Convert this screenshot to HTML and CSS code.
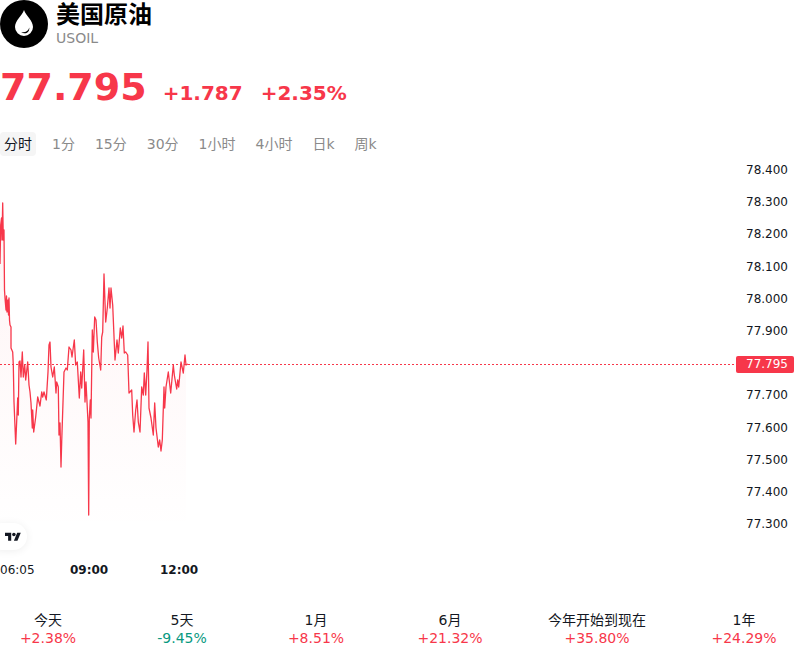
FILE: index.html
```html
<!DOCTYPE html>
<html lang="zh-CN">
<head>
    <meta charset="UTF-8">
    <meta name="viewport" content="width=device-width, initial-scale=1.0">
    <title>美国原油</title>
    <link rel="stylesheet" href="styles.css">
</head>
<body>
    <header class="symbol">
        <svg class="symbol-icon" width="48" height="48" viewBox="0 0 48 48">
            <circle cx="24" cy="24" r="24" fill="#000"/>
            <path d="M24 10 C22 16 15 20.500 15 27 A9 9 0 0 0 33 27 C33 20.500 26 16 24 10 Z" fill="#fff"/>
            <path d="M21 32 C25 33 28.500 31 29.300 27.500 C29.800 32.500 25 35 21 32 Z" fill="#000"/>
        </svg>
        <div class="symbol-text">
            <h1>美国原油</h1>
            <p>USOIL</p>
        </div>
    </header>

    <div class="quote">
        <span class="quote-price">77.795</span>
        <span class="quote-change">+1.787</span>
        <span class="quote-change">+2.35%</span>
    </div>

    <nav class="tabs">
        <a class="tab active">分时</a>
        <a class="tab">1分</a>
        <a class="tab">15分</a>
        <a class="tab">30分</a>
        <a class="tab">1小时</a>
        <a class="tab">4小时</a>
        <a class="tab">日k</a>
        <a class="tab">周k</a>
    </nav>

    <section class="chart">
        <svg class="chart-plot" width="736" height="404" viewBox="0 156 736 404">
            <defs>
                <linearGradient id="area-fill" x1="0" y1="203" x2="0" y2="532" gradientUnits="userSpaceOnUse">
                    <stop offset="0" stop-color="#f7374a" stop-opacity="0.06"/>
                    <stop offset="1" stop-color="#f7374a" stop-opacity="0"/>
                </linearGradient>
            </defs>
            <polygon fill="url(#area-fill)" points="0,532 0,264 0.700,225 1.500,218 2,240 2.700,203 3.300,240 4,230 4.500,290 5,298 6,310 6.500,296 7,312 8,300 8.500,315 9,298 9.500,320 10,325 11,327 11,348 12.700,352 13.300,365 14,402 15.700,444 17.700,398 18.300,415 19,362 20,361 21,377 22.300,352 23.300,377 24.700,365 25.700,380 27.700,362 29,385 30,392 31,403 32.300,428 32.700,410 33.700,432 35.700,417 37.700,397 40,406 41.700,392 42.700,397 44,392 46.300,400 48,372 49,345 50,342 51,367 52.700,377 54.300,367 56,393 56.700,382 58.300,387 59,435 60,423 61,467 61.700,442 64,372 66,368 67.300,370 69,347 71,350 72,357 74.300,340 75.700,365 77.300,362 78.300,380 79.300,398 80.700,372 81.700,388 83.700,350 85,402 86,382 88,422 88.700,515 89.300,418 90.300,400 91,418 92.300,330 93.300,352 94.700,317 96,320 97.300,342 98.700,358 100.700,370 101.700,337 102.700,332 104,274 105.700,322 107.300,308 109,288 110,308 111,288 112.700,305 115,360 117,340 118.300,353 120.300,328 121.700,338 123,326 124.300,353 125.700,352 127.700,355 129,393 131.700,390 132.700,415 134,432 135.700,410 137,400 138.300,422 140,432 141.700,387 143.300,395 144.300,373 145.700,395 147,370 148,342 149,408 151,418 153.300,435 154.700,403 156,428 158.300,447 159.700,440 161,451 162.300,440 164,387 164.700,408 166,387 168.300,372 170.700,393 173.300,365 174.300,375 176.700,389 177.700,380 178.700,387 181,362 183.300,373 185,355 186,365 186,532"/>
            <polyline class="chart-line" points="0,264 0.700,225 1.500,218 2,240 2.700,203 3.300,240 4,230 4.500,290 5,298 6,310 6.500,296 7,312 8,300 8.500,315 9,298 9.500,320 10,325 11,327 11,348 12.700,352 13.300,365 14,402 15.700,444 17.700,398 18.300,415 19,362 20,361 21,377 22.300,352 23.300,377 24.700,365 25.700,380 27.700,362 29,385 30,392 31,403 32.300,428 32.700,410 33.700,432 35.700,417 37.700,397 40,406 41.700,392 42.700,397 44,392 46.300,400 48,372 49,345 50,342 51,367 52.700,377 54.300,367 56,393 56.700,382 58.300,387 59,435 60,423 61,467 61.700,442 64,372 66,368 67.300,370 69,347 71,350 72,357 74.300,340 75.700,365 77.300,362 78.300,380 79.300,398 80.700,372 81.700,388 83.700,350 85,402 86,382 88,422 88.700,515 89.300,418 90.300,400 91,418 92.300,330 93.300,352 94.700,317 96,320 97.300,342 98.700,358 100.700,370 101.700,337 102.700,332 104,274 105.700,322 107.300,308 109,288 110,308 111,288 112.700,305 115,360 117,340 118.300,353 120.300,328 121.700,338 123,326 124.300,353 125.700,352 127.700,355 129,393 131.700,390 132.700,415 134,432 135.700,410 137,400 138.300,422 140,432 141.700,387 143.300,395 144.300,373 145.700,395 147,370 148,342 149,408 151,418 153.300,435 154.700,403 156,428 158.300,447 159.700,440 161,451 162.300,440 164,387 164.700,408 166,387 168.300,372 170.700,393 173.300,365 174.300,375 176.700,389 177.700,380 178.700,387 181,362 183.300,373 185,355 186,365 188,364"/>
            <line class="chart-last" x1="0" y1="364.500" x2="736" y2="364.500"/>
        </svg>

        <div class="price-axis">
            <span>78.400</span>
            <span>78.300</span>
            <span>78.200</span>
            <span>78.100</span>
            <span>78.000</span>
            <span>77.900</span>
            <span class="axis-hidden"></span>
            <span>77.700</span>
            <span>77.600</span>
            <span>77.500</span>
            <span>77.400</span>
            <span>77.300</span>
        </div>

        <div class="last-tag">77.795</div>

        <div class="tv-badge">
            <svg width="16" height="12" viewBox="0 0 36 27">
                <path d="M14 22H7V11H0V4h14v18zM28 22h-8l7.500-18h8L28 22z" fill="#131722"/>
                <circle cx="20" cy="8" r="4" fill="#131722"/>
            </svg>
        </div>
    </section>

    <div class="time-axis">
        <span>06:05</span>
        <span class="major">09:00</span>
        <span class="major">12:00</span>
    </div>

    <div class="periods">
        <div class="period"><span>今天</span><span class="up">+2.38%</span></div>
        <div class="period"><span>5天</span><span class="down">-9.45%</span></div>
        <div class="period"><span>1月</span><span class="up">+8.51%</span></div>
        <div class="period"><span>6月</span><span class="up">+21.32%</span></div>
        <div class="period"><span>今年开始到现在</span><span class="up">+35.80%</span></div>
        <div class="period"><span>1年</span><span class="up">+24.29%</span></div>
    </div>
</body>
</html>
```

FILE: styles.css
```css
body, html {
    margin: 0;
    padding: 0;
    background-color: #fff;
    color: #131722;
}

body {
    width: 800px;
    height: 658px;
    overflow: hidden;
    font-family: "DejaVu Sans", "Noto Sans CJK SC", sans-serif;
}

.symbol {
    display: flex;
    align-items: flex-start;
    gap: 8px;
    height: 48px;
}

.symbol-text h1 {
    margin: 0;
    font-size: 24px;
    line-height: 30px;
    font-weight: 700;
    color: #000;
}

.symbol-text p {
    margin: 0;
    font-size: 14px;
    line-height: 16px;
    color: #8a8a8a;
}

.quote {
    display: flex;
    align-items: baseline;
    gap: 18px;
    height: 56px;
    padding-top: 12px;
    color: #f7374a;
    font-weight: 700;
}

.quote-price {
    margin-right: -2px;
    font-size: 38px;
    line-height: 54px;
}

.quote-change {
    font-size: 20px;
}

.tabs {
    display: flex;
    gap: 12px;
    height: 24px;
    margin-top: 16px;
}

.tab {
    padding: 0 4px;
    font-size: 14px;
    line-height: 24px;
    color: #8a8a8a;
    border-radius: 4px;
}

.tab.active {
    color: #131722;
    background-color: #f5f5f5;
}

.chart {
    position: relative;
    display: flex;
    height: 404px;
}

.chart-plot {
    display: block;
    flex: none;
}

.chart-line {
    fill: none;
    stroke: #f7374a;
    stroke-width: 1.300;
    stroke-linejoin: round;
}

.chart-last {
    stroke: #f7374a;
    stroke-width: 1;
    stroke-dasharray: 2 2;
}

.price-axis {
    display: flex;
    flex-direction: column;
    padding-left: 10px;
    margin-top: -2px;
    font-size: 12px;
    line-height: 32.200px;
}

.axis-hidden {
    height: 32.200px;
}

.last-tag {
    position: absolute;
    left: 736px;
    top: 200px;
    width: 58px;
    height: 17px;
    padding-left: 10px;
    box-sizing: border-box;
    border-radius: 2px;
    font-size: 12px;
    line-height: 17px;
    color: #fff;
    background-color: #f7374a;
}

.tv-badge {
    position: absolute;
    left: -11px;
    top: 367px;
    display: flex;
    align-items: center;
    justify-content: center;
    width: 38px;
    height: 27px;
    padding-left: 9px;
    box-sizing: border-box;
    border-radius: 14px;
    background-color: #fff;
    box-shadow: 0 1px 8px rgba(0, 0, 0, 0.07);
}

.time-axis {
    display: grid;
    grid-template-columns: 70px 90px auto;
    height: 18px;
    margin-top: 1px;
    font-size: 12px;
    line-height: 18px;
}

.time-axis .major {
    font-weight: 700;
}

.periods {
    display: flex;
    justify-content: space-between;
    width: 792px;
    margin-top: 32px;
}

.period {
    display: flex;
    flex-direction: column;
    align-items: center;
    min-width: 96px;
    padding: 0 12px;
    box-sizing: border-box;
    font-size: 14px;
    line-height: 18px;
}

.up {
    color: #f7374a;
}

.down {
    color: #089981;
}
```
